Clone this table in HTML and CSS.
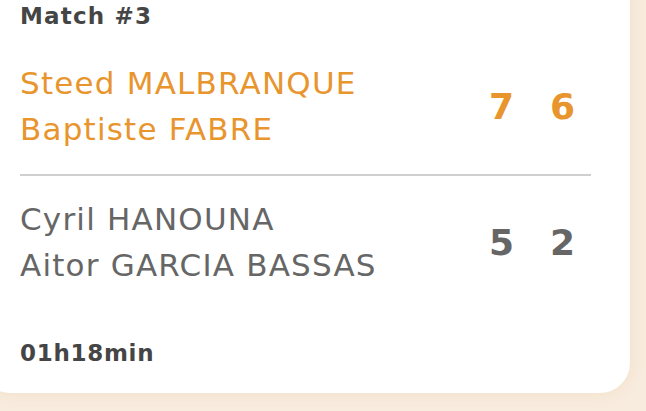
FILE: index.html
```html
<!DOCTYPE html>
<html>
<head>
<meta charset="utf-8">
<link rel="stylesheet" href="styles.css">
</head>
<body>
<div class="card">
  <div class="title">Match #3</div>
  <div class="team winner">
    <div class="names">
      <div class="name">Steed MALBRANQUE</div>
      <div class="name">Baptiste FABRE</div>
    </div>
    <div class="scores">
      <span class="score">7</span>
      <span class="score">6</span>
    </div>
  </div>
  <div class="divider"></div>
  <div class="team loser">
    <div class="names">
      <div class="name">Cyril HANOUNA</div>
      <div class="name">Aitor GARCIA BASSAS</div>
    </div>
    <div class="scores">
      <span class="score">5</span>
      <span class="score">2</span>
    </div>
  </div>
  <div class="duration">01h18min</div>
</div>
</body>
</html>
```

FILE: styles.css
```css
html, body {
  margin: 0;
  padding: 0;
  background: #f8ecde;
  width: 646px;
  height: 411px;
  overflow: hidden;
  font-family: "DejaVu Sans", sans-serif;
}
.card {
  box-sizing: border-box;
  width: 650px;
  margin: -40px 0 0 -20px;
  padding: 40px 39px 0 40px;
  height: 433px;
  background: #ffffff;
  border-radius: 30px;
  box-shadow: 0 0 14px rgba(236, 206, 170, 0.45);
}
.title {
  font-size: 23px;
  font-weight: 600;
  color: #454545;
  line-height: 32px;
  letter-spacing: 1.2px;
}
.team {
  display: flex;
  align-items: center;
  justify-content: space-between;
}
.winner { margin-top: 28px; }
.loser { margin-top: 20px; }
.names {
  display: flex;
  flex-direction: column;
}
.name {
  font-size: 31px;
  line-height: 46px;
  letter-spacing: 1.2px;
}
.winner .name, .winner .score { color: #e8952e; }
.loser .name, .loser .score { color: #666666; }
.scores {
  display: flex;
  gap: 36px;
  padding-right: 16px;
}
.score {
  font-size: 36px;
  font-weight: 700;
}
.divider {
  height: 2px;
  background: #cfcfcf;
  margin-top: 22px;
}
.duration {
  margin-top: 52px;
  font-size: 23px;
  font-weight: 600;
  color: #454545;
  letter-spacing: 0.7px;
}
```
